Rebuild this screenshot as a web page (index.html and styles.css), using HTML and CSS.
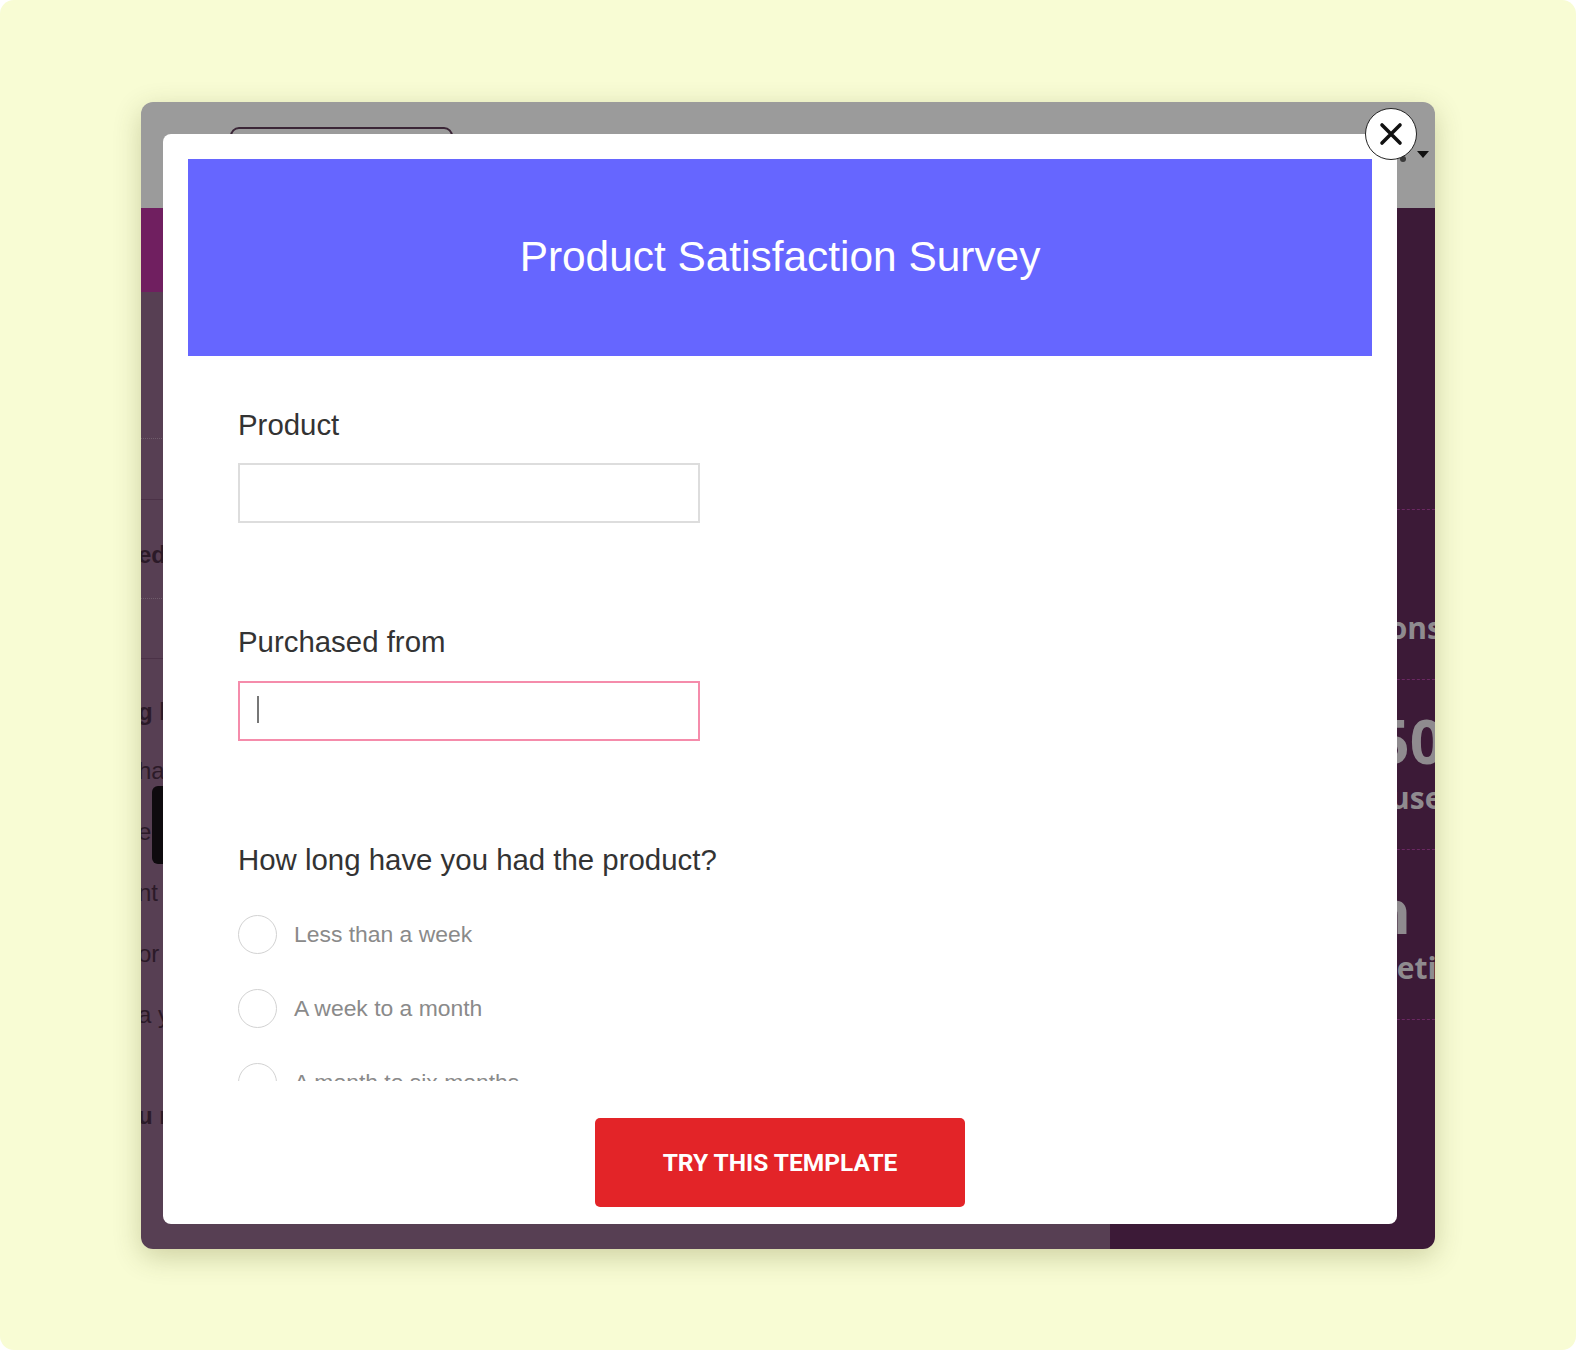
FILE: index.html
```html
<!DOCTYPE html>
<html lang="en">
<head>
<meta charset="utf-8">
<title>Product Satisfaction Survey</title>
<link rel="stylesheet" href="styles.css">
</head>
<body>
<div class="page">
  <div class="frame">
    <div class="site">
      <header class="site-header">
        <div class="header-btn"></div>
        <div class="header-user">
          <span class="user-dot"></span>
          <span class="caret-down"></span>
        </div>
      </header>
      <div class="site-body">
        <main class="site-main">
          <div class="hero-band"></div>
          <div class="row row-a"></div>
          <div class="row row-b"></div>
          <div class="row row-c"><span class="line bold">ed templates</span></div>
          <div class="row row-d"></div>
          <div class="lesson">
            <div class="line bold lesson-head">g l</div>
            <div class="para">
              <div class="line">ha</div>
              <div class="line">ek</div>
              <div class="line">nt</div>
              <div class="line">or</div>
              <div class="line">a y</div>
              <div class="thumb"></div>
            </div>
            <div class="line bold lesson-tail">u r</div>
          </div>
        </main>
        <aside class="sidebar">
          <div class="side-top"></div>
          <div class="stat">
            <div class="stat-num m-hide">12</div>
            <div class="stat-label m-q">Questions</div>
          </div>
          <div class="stat">
            <div class="stat-num m-250">250</div>
            <div class="stat-label m-users">users</div>
          </div>
          <div class="stat">
            <div class="stat-num m-min">2 min</div>
            <div class="stat-label m-comp">completion</div>
          </div>
        </aside>
      </div>
    </div>

    <div class="modal">
      <div class="survey-head">
        <h1 class="survey-title">Product Satisfaction Survey</h1>
      </div>
      <div class="survey-body">
        <div class="field">
          <label class="field-label">Product</label>
          <div class="text-input"></div>
        </div>
        <div class="field">
          <label class="field-label">Purchased from</label>
          <div class="text-input is-focused"><span class="caret"></span></div>
        </div>
        <p class="question">How long have you had the product?</p>
        <div class="radio-list">
          <div class="radio-row"><span class="radio"></span><span class="radio-text">Less than a week</span></div>
          <div class="radio-row"><span class="radio"></span><span class="radio-text">A week to a month</span></div>
          <div class="radio-row"><span class="radio"></span><span class="radio-text">A month to six months</span></div>
          <div class="radio-row"><span class="radio"></span><span class="radio-text">More than six months</span></div>
        </div>
      </div>
      <div class="survey-foot">
        <button class="try-btn" type="button">TRY THIS TEMPLATE</button>
      </div>
      <button class="close-btn" type="button" aria-label="Close">
        <svg width="26" height="26" viewBox="0 0 26 26"><path d="M4 4 L22 22 M22 4 L4 22" stroke="#111" stroke-width="3.6" stroke-linecap="round" fill="none"/></svg>
      </button>
    </div>
  </div>
</div>
</body>
</html>
```

FILE: styles.css
```css
* { box-sizing: border-box; }
html, body { margin: 0; padding: 0; background: #ffffff; }
body { font-family: "Liberation Sans", Arial, sans-serif; }

.page {
  width: 1576px;
  height: 1350px;
  background: #f8fcd4;
  border-radius: 14px;
  display: flex;
  align-items: center;
  justify-content: center;
  overflow: hidden;
}

.frame {
  position: relative;
  width: 1294px;
  height: 1147px;
  border-radius: 12px;
  overflow: hidden;
  box-shadow: 0 8px 28px rgba(70, 70, 0, 0.24);
}

.site { height: 100%; display: flex; flex-direction: column; }
.site-header {
  height: 106px;
  flex: none;
  background: #9b9b9b;
  display: flex;
  align-items: center;
  justify-content: space-between;
  padding: 0 6px 0 89px;
}
.header-btn { width: 223px; height: 56px; border: 2px solid #3b2637; border-radius: 9px; }
.header-user { display: flex; align-items: center; gap: 11px; }
.user-dot { width: 6px; height: 6px; border-radius: 50%; background: #3a3a3a; margin-top: 8px; }
.caret-down {
  width: 0; height: 0;
  border-left: 6.5px solid transparent;
  border-right: 6.5px solid transparent;
  border-top: 7px solid #111;
}

.site-body { flex: 1; display: grid; grid-template-columns: 969px 325px; }
.site-main { background: #573f53; color: #2b1a28; font-size: 24px; }
.hero-band { height: 84px; background: #701f60; }
.row { border-bottom: 1px solid #4b3247; }
.row-a { height: 147px; border-bottom: 1px dotted #6f5c6b; }
.row-b { height: 61px; }
.row-c { height: 99px; padding-top: 42px; border-bottom: 1px dotted #6f5c6b; }
.row-d { height: 60px; }
.line { display: block; white-space: nowrap; line-height: 26px; margin-left: -3px; }
.bold { font-weight: 700; }
.lesson { padding-top: 25px; }
.lesson-head { line-height: 56px; }
.para { position: relative; }
.para .line { line-height: 61px; }
.thumb {
  position: absolute;
  left: 11px;
  top: 46px;
  width: 40px;
  height: 78px;
  border-radius: 6px;
  background: #0e0a0e;
}
.lesson-tail { line-height: 61px; margin-top: 40px; }

.sidebar {
  background: #3c1a37;
  font-family: "Open Sans", sans-serif;
  font-weight: 700;
  color: #8f8b8f;
}
.side-top { height: 302px; border-bottom: 1px dashed #6b2863; }
.stat {
  height: 170px;
  border-bottom: 1px dashed #6b2863;
  display: flex;
  flex-direction: column;
  align-items: flex-end;
  justify-content: center;
  gap: 6px;
  white-space: nowrap;
}
.stat-num { font-size: 60px; line-height: 62px; }
.stat-label { font-size: 30px; line-height: 40px; }
.m-hide { margin-right: 80px; }
.m-q { margin-right: -7px; }
.m-250 { margin-right: -9px; }
.m-users { margin-right: -36px; }
.m-min { margin-right: 24px; }
.m-comp { margin-right: -40px; }

/* modal */
.modal {
  position: absolute;
  left: 22px;
  top: 32px;
  width: 1234px;
  height: 1090px;
  background: #ffffff;
  border-radius: 8px;
  padding: 25px 25px 16px;
  display: flex;
  flex-direction: column;
}
.survey-head {
  height: 197px;
  flex: none;
  background: #6666ff;
  display: flex;
  align-items: center;
  justify-content: center;
}
.survey-title {
  margin: 0;
  font-weight: 400;
  font-size: 42.4px;
  line-height: 1.15;
  color: #ffffff;
}
.survey-body {
  height: 725px;
  flex: none;
  overflow: hidden;
  padding: 52px 50px 0;
}
.field { margin-bottom: 102px; }
.field-label {
  display: block;
  font-size: 29.4px;
  line-height: 34px;
  color: #333333;
  margin-bottom: 21.5px;
}
.text-input {
  width: 462px;
  height: 60px;
  border: 2px solid #dddddd;
  background: #ffffff;
  display: flex;
  align-items: center;
  padding-left: 17px;
}
.text-input.is-focused { border-color: #f58cab; }
.caret { width: 2px; height: 27px; background: #777777; margin-top: -3px; }

.question {
  margin: 0 0 38px;
  font-size: 29.4px;
  line-height: 34px;
  color: #333333;
}
.radio-list { display: flex; flex-direction: column; gap: 35px; }
.radio-row { display: flex; align-items: center; gap: 17px; height: 39px; }
.radio {
  width: 39px;
  height: 39px;
  flex: none;
  border-radius: 50%;
  border: 1.5px solid #d2d2d2;
}
.radio-text { font-size: 22.9px; color: #8a8a8a; }

.survey-foot { margin-top: 37px; display: flex; justify-content: center; }
.try-btn {
  width: 370px;
  height: 89px;
  border: none;
  border-radius: 5px;
  background: #e32428;
  color: #ffffff;
  font-family: Roboto, "Liberation Sans", sans-serif;
  font-weight: 700;
  font-size: 24.5px;
  padding: 0;
}

.close-btn {
  position: absolute;
  top: -26px;
  right: -20px;
  width: 52px;
  height: 52px;
  padding: 0;
  border-radius: 50%;
  background: #ffffff;
  border: 1.5px solid #222222;
  display: flex;
  align-items: center;
  justify-content: center;
}
.close-btn svg { display: block; }
```
